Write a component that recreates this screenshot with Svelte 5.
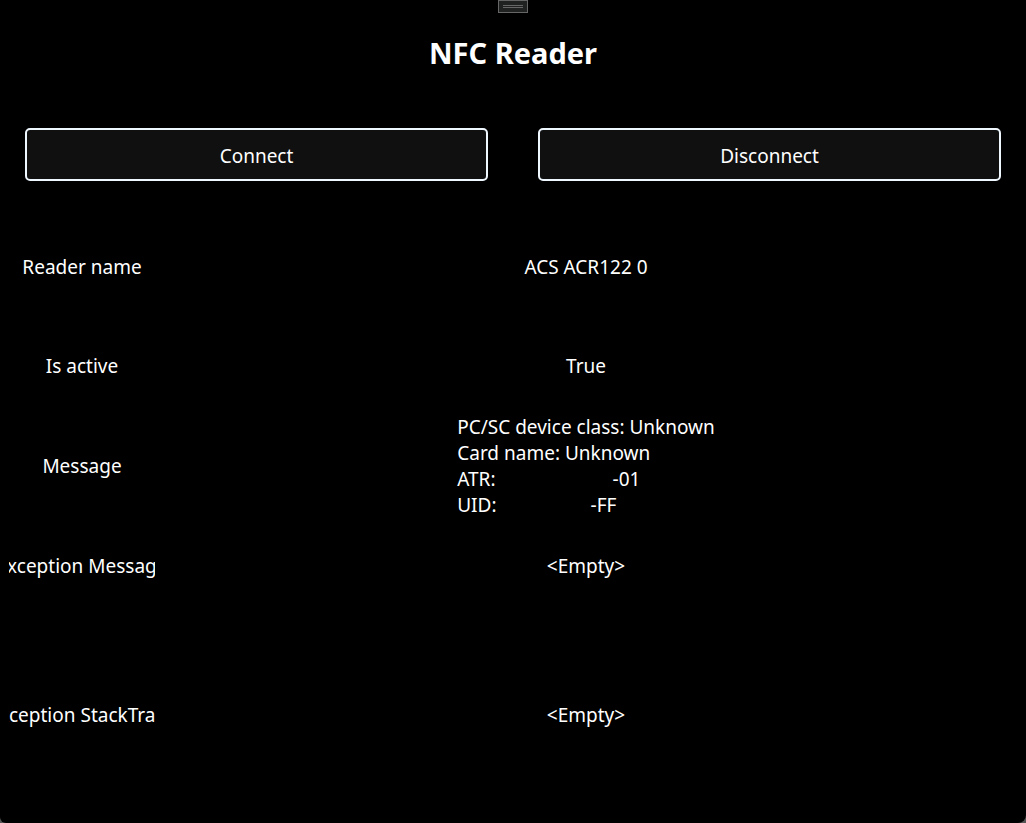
<script>
  let active = $state(true);
</script>

<main>
  <button class="handle" type="button" aria-label="Toolbar"><span></span></button>
  <h1>NFC Reader</h1>
  <div class="actions">
    <button type="button" onclick={() => (active = true)}>Connect</button>
    <button type="button" onclick={() => (active = false)}>Disconnect</button>
  </div>
  <dl>
    <div class="row"><dt><span>Reader name</span></dt><dd>ACS ACR122 0</dd></div>
    <div class="row"><dt><span>Is active</span></dt><dd>{active ? 'True' : 'False'}</dd></div>
    <div class="row">
      <dt><span>Message</span></dt>
      <dd>
        <div class="message">
          <div>PC/SC device class: Unknown</div>
          <div>Card name: Unknown</div>
          <div>ATR:<span class="hidden long"></span>-01</div>
          <div>UID:<span class="hidden"></span>-FF</div>
        </div>
      </dd>
    </div>
    <div class="row"><dt><span>Exception Message</span></dt><dd>&lt;Empty&gt;</dd></div>
    <div class="row"><dt><span>Exception StackTrace</span></dt><dd>&lt;Empty&gt;</dd></div>
  </dl>
</main>

<style>
  :global(body) {
    margin: 0;
    background: #555;
  }
  main {
    position: relative;
    box-sizing: border-box;
    min-height: 100vh;
    display: flex;
    flex-direction: column;
    padding: 0 9px 8px;
    background: #000;
    border-radius: 0 0 8px 6px;
    color: #fff;
    font: 19px/26px "Segoe UI", "Noto Sans", sans-serif;
  }
  .handle {
    position: absolute;
    top: 0;
    left: 50%;
    transform: translateX(-50%);
    box-sizing: border-box;
    width: 30px;
    height: 13px;
    padding: 4px;
    border: 1px solid #666;
    background: #202221;
  }
  .handle span {
    display: block;
    box-sizing: border-box;
    width: 20px;
    height: 3px;
    border: solid #666;
    border-width: 1px 0;
  }
  h1 {
    margin: 0;
    padding-top: 33px;
    text-align: center;
    font-size: 29px;
    line-height: 40px;
    font-weight: 700;
  }
  .actions {
    display: grid;
    grid-template-columns: 1fr 1fr;
    gap: 50px;
    padding: 55px 16px 36px;
  }
  .actions button {
    height: 53px;
    padding: 2px 0 0;
    border: 2px solid #f0f8ff;
    border-radius: 5px;
    background: #101010;
    color: #fff;
    font: inherit;
  }
  dl {
    flex: 1;
    margin: 0;
    display: grid;
    grid-template-rows: 1fr 1fr 1fr 1fr 2fr;
  }
  .row {
    display: grid;
    grid-template-columns: 146px 1fr;
    align-items: center;
  }
  dt {
    display: flex;
    justify-content: center;
    overflow: hidden;
    white-space: nowrap;
  }
  dt span {
    flex: none;
  }
  dd {
    margin: 0;
    display: flex;
    justify-content: center;
  }
  .message {
    margin: -4px 0;
  }
  .hidden {
    display: inline-block;
    width: 94px;
  }
  .long {
    width: 117px;
  }
</style>
